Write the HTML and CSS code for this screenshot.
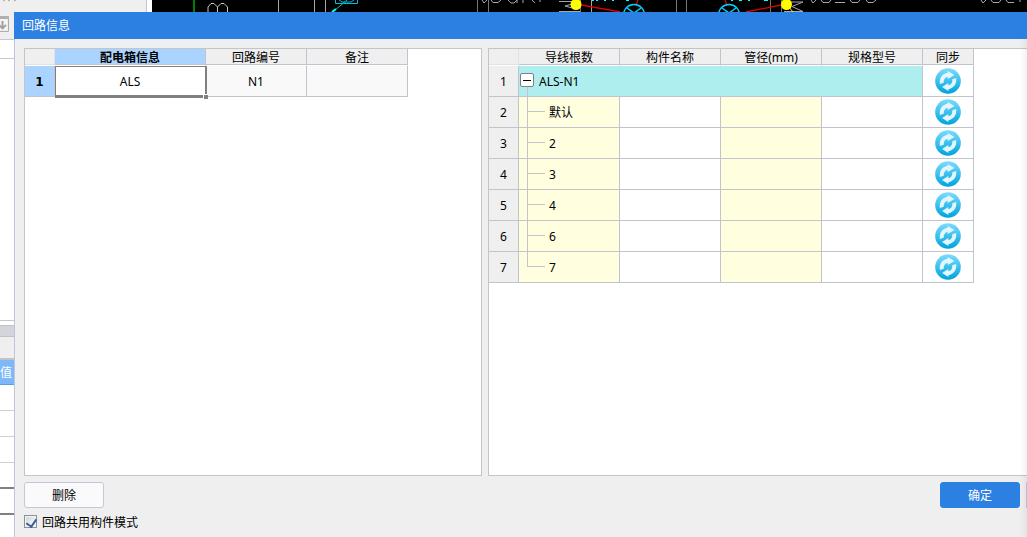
FILE: index.html
```
<!DOCTYPE html>
<html lang="zh-CN">
<head>
<meta charset="utf-8">
<title>回路信息</title>
<link rel="stylesheet" href="styles.css">
</head>
<body>
<svg class="defs" aria-hidden="true">
  <defs>
    <linearGradient id="disc" x1="0" y1="0" x2="0" y2="1">
      <stop offset="0" stop-color="#7ddcfb"/>
      <stop offset="0.5" stop-color="#3cc0ee"/>
      <stop offset="1" stop-color="#00a2dd"/>
    </linearGradient>
    <symbol id="sync" viewBox="0 0 28 28">
      <circle cx="14" cy="14" r="13.8" fill="url(#disc)"/>
      <g fill="#e2f6fd">
        <path d="M5.200 17.200C4.400 10.600 7.800 6.200 13.600 5.200V3.200L21 7.600L13.600 11.800V9.400C10.600 10.200 9 12.600 9.400 16Z"/>
        <path d="M22.800 10.800C23.600 17.400 20.200 21.800 14.400 22.800V24.800L7.600 20.400L14.400 16.200V18.600C17.400 17.800 19 15.400 18.600 12Z"/>
      </g>
    </symbol>
  </defs>
</svg>
<div class="desktop">
  <div class="app-top">
    <svg class="tool" viewBox="0 0 147 39" aria-hidden="true">
      <path d="M4 0v1M9 0v1M15 0v1" stroke="#8a5a34" fill="none"/>
      <path d="M-1 17.500H8.500V31.500H-1" fill="#f4f4f4" stroke="#a6a6a6"/>
      <path d="M-1 17.500H9" stroke="#b0b0b0" stroke-width="3"/>
      <path d="M2.500 21V28M-1 25L2.500 28.500L6 25" fill="none" stroke="#a0a0a0" stroke-width="2"/>
    </svg>
    <svg class="cad" viewBox="152 0 875 12" preserveAspectRatio="xMinYMin slice" aria-hidden="true">
      <rect x="152" width="875" height="12" fill="#000"/>
      <path d="M194 0V12" stroke="#008000" stroke-width="2"/>
      <g fill="none" stroke="#a8a8a8">
        <path d="M208 12V7L211 3.500H214L217.500 7V12M217.500 7L221 3.500H224L227.500 7V12" stroke="#c8c8c8"/>
        <path d="M278.500 0V12M314.500 0V12M325.500 0V12M591.500 0V12"/>
        <path d="M482 0L484 3L487 0M491 0L493 2.500H498L501 0M508 0L511 3H514L517 0V3M523 0V3M532 0L535 3M540 0V2"/>
        <path d="M559 1.500H576M559 11.500H580M576 3L565 6L576 9"/>
        <path d="M784 2L803 2L792 6.500L803 11.500H784M811 0L813 3L816 0M821 0L823 2.500H829L831 0M835 2.500H845M850 0L852 2.500H858L860 0M866 0L868 2.500H873L876 0M981 0L983 3L986 0M991 0L993 2.500H999L1001 0M1006 0L1008 2.500H1014M1020 0V2"/>
      </g>
      <g fill="none" stroke="#777">
        <path d="M477.500 0V12M488.500 0V12M580.500 0V12M676.500 0V12M686.500 0V12M770.500 0V12M781.500 0V12"/>
      </g>
      <g fill="none" stroke="#00bcd4">
        <path d="M335.500 0V3.500H357.500V0M339 0L342 2H351L354 0M334 11L347 0"/>
        <path d="M332 12L336 9" stroke="#0ff" stroke-width="2"/>
        <path d="M592 0H594M597 0V1M604 0H606M612 0H614M626 0H629M731 0H733M739 0H742M749 0V1M764 0H768" stroke="#0ff" stroke-width="2"/>
      </g>
      <path d="M576 4L620 12M638 0L636 5M725 0L727 5M746 12L786 4" fill="none" stroke="#e00000" stroke-width="1.300"/>
      <g fill="none" stroke="#00cfff" stroke-width="1.500">
        <circle cx="634" cy="15" r="10.500"/>
        <path d="M627 8L634 13L641 8"/>
        <circle cx="729" cy="15" r="10.500"/>
        <path d="M722 8L729 13L736 8"/>
      </g>
      <circle cx="576" cy="4.500" r="5.500" fill="#ff0"/>
      <circle cx="786.500" cy="4.500" r="5.500" fill="#ff0"/>
      <path d="M788 6L793 12" stroke="#ff0"/>
    </svg>
  </div>
  <div class="app-side">
    <div class="side-head"></div>
    <div class="side-blank"></div>
    <div class="side-split"></div>
    <div class="side-bar"></div>
    <div class="side-value">值</div>
    <div class="side-row"></div>
    <div class="side-row"></div>
    <div class="side-row"></div>
    <div class="side-row strong"></div>
    <div class="side-row strong"></div>
  </div>

  <main class="dialog">
    <h1 class="title">回路信息</h1>
    <div class="panels">
      <section class="panel">
        <table class="grid boxes">
          <colgroup><col class="c-num"><col class="c-box"><col class="c-std"><col class="c-std"></colgroup>
          <thead><tr><th class="corner"></th><th class="active">配电箱信息</th><th>回路编号</th><th>备注</th></tr></thead>
          <tbody><tr><th class="active">1</th><td class="selected">ALS<span class="handle"></span></td><td>N1</td><td></td></tr></tbody>
        </table>
      </section>
      <section class="panel wires">
        <table class="grid">
          <colgroup><col class="c-num"><col class="c-std"><col class="c-std"><col class="c-std"><col class="c-std"><col class="c-sync"></colgroup>
          <thead><tr><th class="corner"></th><th>导线根数</th><th>构件名称</th><th>管径(mm)</th><th>规格型号</th><th>同步</th></tr></thead>
          <tbody>
            <tr><th>1</th><td class="group" colspan="4"><div class="root"><button class="toggle" aria-label="折叠"></button>ALS-N1</div></td><td><button class="sync" aria-label="同步"><svg><use href="#sync"/></svg></button></td></tr>
            <tr><th>2</th><td class="tint"><div class="leaf">默认</div></td><td></td><td class="tint"></td><td></td><td><button class="sync" aria-label="同步"><svg><use href="#sync"/></svg></button></td></tr>
            <tr><th>3</th><td class="tint"><div class="leaf">2</div></td><td></td><td class="tint"></td><td></td><td><button class="sync" aria-label="同步"><svg><use href="#sync"/></svg></button></td></tr>
            <tr><th>4</th><td class="tint"><div class="leaf">3</div></td><td></td><td class="tint"></td><td></td><td><button class="sync" aria-label="同步"><svg><use href="#sync"/></svg></button></td></tr>
            <tr><th>5</th><td class="tint"><div class="leaf">4</div></td><td></td><td class="tint"></td><td></td><td><button class="sync" aria-label="同步"><svg><use href="#sync"/></svg></button></td></tr>
            <tr><th>6</th><td class="tint"><div class="leaf">6</div></td><td></td><td class="tint"></td><td></td><td><button class="sync" aria-label="同步"><svg><use href="#sync"/></svg></button></td></tr>
            <tr><th>7</th><td class="tint"><div class="leaf last">7</div></td><td></td><td class="tint"></td><td></td><td><button class="sync" aria-label="同步"><svg><use href="#sync"/></svg></button></td></tr>
          </tbody>
        </table>
      </section>
    </div>
    <footer class="footer">
      <div class="actions">
        <button class="btn">删除</button>
        <button class="btn primary">确定</button>
        <span class="edge"></span>
      </div>
      <label class="share"><input type="checkbox" checked>回路共用构件模式</label>
    </footer>
  </main>
</div>
</body>
</html>
```
FILE: styles.css
```
* { box-sizing: border-box; }

body {
  margin: 0;
  font: 12px/16px "Noto Sans", "Noto Sans CJK SC", sans-serif;
  color: #000;
}

button { font: inherit; padding: 0; }

.defs { position: absolute; width: 0; height: 0; }

.desktop {
  position: relative;
  height: 100vh;
  overflow: hidden;
  background: #fff;
}

/* Application window behind the dialog */
.app-top { display: flex; height: 39px; }
.tool {
  flex: none;
  width: 147px;
  height: 39px;
  margin-right: 5px;
  background: #efefef;
  border-right: 1px solid #c0c4d4;
}
.cad { flex: 1; height: 12px; min-width: 0; background: #000; }

.app-side { width: 14px; }
.side-head { height: 20px; border: solid #c3c7d0; border-width: 1px 0; }
.side-blank { height: 262px; border-bottom: 1px solid #c3c7d0; }
.side-split {
  height: 12px;
  margin-top: 4px;
  background: #d3d5da;
  border: solid #bfc2c8;
  border-width: 1px 0;
}
.side-bar { height: 23px; background: #efefef; border-bottom: 2px solid #c3c3c3; }
.side-value {
  height: 25px;
  line-height: 26px;
  color: #fff;
  background: #7db8fa;
  border-bottom: 1px solid #5a9ee8;
}
.side-row { height: 26px; border-bottom: 1px solid #d0d0d4; }
.side-row.strong { border-bottom: 2px solid #808080; }

/* Dialog */
.dialog {
  position: absolute;
  inset: 12px 0 0 14px;
  display: flex;
  flex-direction: column;
  background: #efefef;
}
.dialog::after {
  content: "";
  position: absolute;
  inset: 27px 0 0 auto;
  width: 7px;
  background: linear-gradient(to right, transparent, rgba(0, 0, 0, 0.05));
  pointer-events: none;
}
.title {
  flex: none;
  height: 27px;
  margin: 0;
  padding-left: 8px;
  font-size: 12px;
  font-weight: 400;
  line-height: 28px;
  color: #fff;
  background: #2c80e2;
}
.panels {
  flex: 1;
  min-height: 0;
  display: grid;
  grid-template-columns: 458fr 539fr;
  gap: 6px;
  padding: 9px 0 0 9px;
  border-left: 1px solid #c0c4d8;
}
.panel { min-width: 0; overflow: hidden; background: #fff; border: 1px solid #c3c5cb; }
.wires { border-right: 0; }

/* Tables */
.grid { table-layout: fixed; width: 485px; border-spacing: 0; text-align: center; }
.boxes { width: 383px; }
.c-num { width: 30px; }
.c-box { width: 151px; }
.c-std { width: 101px; }
.c-sync { width: 51px; }

.grid th, .grid td {
  height: 31px;
  padding: 0;
  border: solid #c0c4cc;
  border-width: 0 1px 1px 0;
}
.grid th { font-weight: 400; background: #efefef; }
.grid tbody th, .boxes tbody td { padding-top: 2px; }
.grid thead th {
  height: 17px;
  line-height: 14px;
  padding-top: 2px;
  border-bottom-color: #fff;
  box-shadow: inset 0 -1px #c0c4cc;
}
.grid thead .corner { border-right-color: #e2e2e2; box-shadow: inset 0 -1px #e2e2e2; }
.grid .active { font-weight: 700; background: #aad4ff; }
.boxes tbody th { font-family: "DejaVu Sans", sans-serif; }
.boxes td { background: #f9f9f9; }
.boxes .selected { position: relative; background: #fff; }
.selected::after {
  content: "";
  position: absolute;
  inset: 0 -2px -2px 0;
  border: solid #808080;
  border-width: 1px 2px 3px 1px;
}
.handle {
  position: absolute;
  z-index: 1;
  right: -3px;
  bottom: -3px;
  width: 5px;
  height: 5px;
  background: #808080;
  border: solid #fff;
  border-width: 1px 0 0 1px;
}
.grid .group { background: #afeeee; }
.grid .tint { background: #ffffe0; }

/* Tree column */
.root {
  display: flex;
  align-items: center;
  gap: 5px;
  height: 30px;
  padding: 2px 0 0 1px;
  background: linear-gradient(#c0c4cc, #c0c4cc) 8px 100% / 1px 10px no-repeat;
}
.toggle {
  width: 14px;
  height: 14px;
  margin-bottom: 4px;
  background: linear-gradient(#000, #000) center / 8px 1px no-repeat #fff;
  border: 1px solid #808080;
  border-radius: 2px;
}
.leaf {
  height: 31px;
  margin-bottom: -1px;
  padding-left: 30px;
  line-height: 32px;
  text-align: left;
  background:
    linear-gradient(#c0c4cc, #c0c4cc) 8px 0 / 1px 100% no-repeat,
    linear-gradient(#c0c4cc, #c0c4cc) 8px 14px / 18px 1px no-repeat;
}
.leaf.last {
  background:
    linear-gradient(#c0c4cc, #c0c4cc) 8px 0 / 1px 15px no-repeat,
    linear-gradient(#c0c4cc, #c0c4cc) 8px 14px / 18px 1px no-repeat;
}
.sync {
  display: block;
  width: 26px;
  height: 26px;
  margin: 0 auto;
  background: none;
  border: 0;
}
.sync svg { display: block; width: 26px; height: 26px; }

/* Footer */
.footer { padding: 6px 0 5px 9px; border-left: 1px solid #c0c4d8; }
.actions { display: flex; gap: 6px; height: 26px; }
.btn {
  width: 80px;
  padding-top: 2px;
  background: #fafafa;
  border: 1px solid #c0c8dc;
  border-radius: 3px;
}
.primary { margin-left: auto; color: #fff; background: #2c80e2; border-color: #2c80e2; }
.edge { width: 1px; background: #c0c8dc; }
.share {
  display: flex;
  align-items: flex-start;
  gap: 5px;
  width: max-content;
  margin-top: 6px;
  line-height: 18px;
}
.share input {
  appearance: none;
  width: 13px;
  height: 13px;
  margin: 1px 0 0;
  background: linear-gradient(135deg, #cdd2da, #fff);
  border: 1px solid #8e8f8f;
  outline: 1px solid #f4f4f4;
  outline-offset: -2px;
}
.share input::after {
  content: "";
  display: block;
  width: 5px;
  height: 8px;
  margin: 1px 0 0 3px;
  border: solid #3d5a9c;
  border-width: 0 2px 2px 0;
  transform: rotate(35deg);
}
```
